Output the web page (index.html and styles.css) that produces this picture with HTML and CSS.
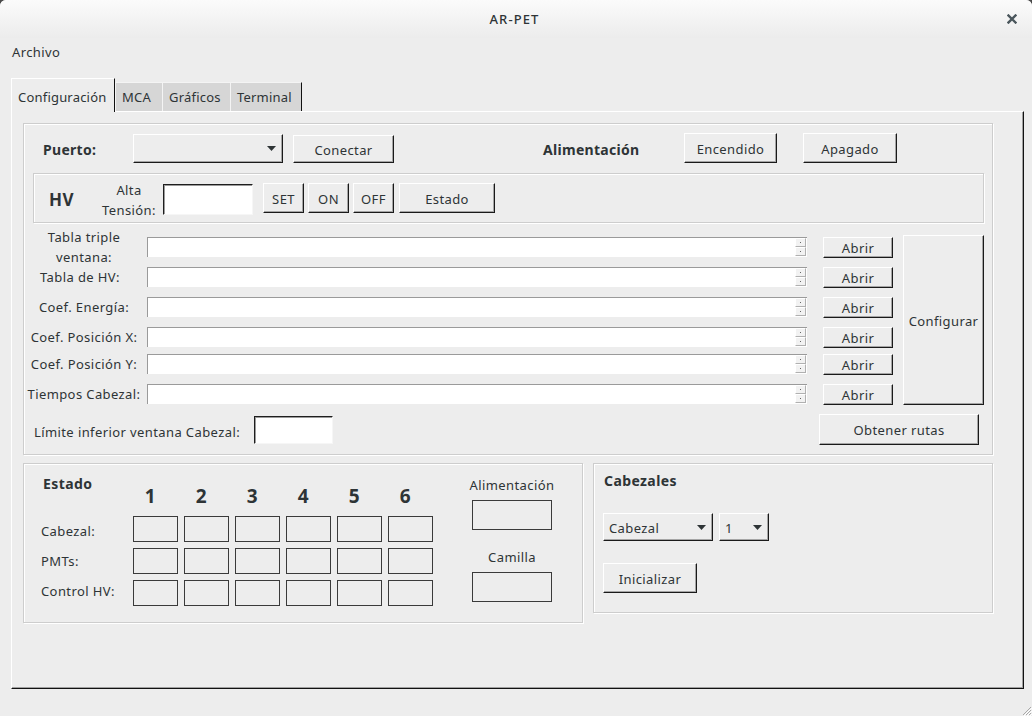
FILE: index.html
```html
<!DOCTYPE html>
<html lang="es">
<head>
<meta charset="utf-8">
<title>AR-PET</title>
<link rel="stylesheet" href="styles.css">
</head>
<body>
<div class="window">
  <div class="titlebar">
    <span></span>
    <span class="title">AR-PET</span>
    <span class="close"><svg width="10" height="10" viewBox="0 0 10 10"><path d="M1.5 1.5 L8.5 8.5 M8.5 1.5 L1.5 8.5" stroke="#4a565c" stroke-width="2.4" stroke-linecap="square"/></svg></span>
  </div>
  <div class="menubar"><span class="menu-item">Archivo</span></div>
  <div class="notebook">
    <div class="tabs">
      <div class="tab selected">Configuración</div>
      <div class="tab t-mca">MCA</div>
      <div class="tab t-graf">Gráficos</div>
      <div class="tab t-term last">Terminal</div>
    </div>
    <div class="panel">
      <div class="group top-group">
        <div class="port-row">
          <div class="bold-lbl puerto">Puerto:</div>
          <div class="combo port-combo"><span></span><svg class="arrow" width="9" height="5" viewBox="0 0 9 5"><path d="M0 0 H9 L4.5 5 Z" fill="#2e3436"/></svg></div>
          <div class="btn conectar">Conectar</div>
          <div class="bold-lbl alim">Alimentación</div>
          <div class="btn encendido">Encendido</div>
          <div class="btn apagado">Apagado</div>
        </div>
        <div class="group hv-group">
          <div class="hv-lbl">HV</div>
          <div class="alta-lbl">Alta<br>Tensión:</div>
          <div class="entry hv-entry"></div>
          <div class="btn small set">SET</div>
          <div class="btn small on">ON</div>
          <div class="btn small off">OFF</div>
          <div class="btn small estado-btn">Estado</div>
        </div>
        <div class="paths">
          <div class="plabel two">Tabla triple<br>ventana:</div>
          <div class="path"><div class="spin"><i></i><i></i></div></div>
          <div class="btn abrir">Abrir</div>
          <div class="btn configurar">Configurar</div>

          <div class="plabel hvt">Tabla de HV:</div>
          <div class="path"><div class="spin"><i></i><i></i></div></div>
          <div class="btn abrir">Abrir</div>

          <div class="plabel">Coef. Energía:</div>
          <div class="path"><div class="spin"><i></i><i></i></div></div>
          <div class="btn abrir">Abrir</div>

          <div class="plabel">Coef. Posición X:</div>
          <div class="path"><div class="spin"><i></i><i></i></div></div>
          <div class="btn abrir">Abrir</div>

          <div class="plabel">Coef. Posición Y:</div>
          <div class="path"><div class="spin"><i></i><i></i></div></div>
          <div class="btn abrir">Abrir</div>

          <div class="plabel">Tiempos Cabezal:</div>
          <div class="path"><div class="spin"><i></i><i></i></div></div>
          <div class="btn abrir">Abrir</div>
        </div>
        <div class="limit-row">
          <div class="limit-lbl">Límite inferior ventana Cabezal:</div>
          <div class="entry limit-entry"></div>
          <div class="btn obtener">Obtener rutas</div>
        </div>
      </div>

      <div class="bottom-row">
        <div class="group estado">
          <div class="estado-grid">
            <div class="estado-title">Estado</div>
            <div class="num">1</div><div class="num">2</div><div class="num">3</div><div class="num">4</div><div class="num">5</div><div class="num">6</div>
            <div class="rowlbl r1">Cabezal:</div>
            <div class="cell"></div><div class="cell"></div><div class="cell"></div><div class="cell"></div><div class="cell"></div><div class="cell"></div>
            <div class="rowlbl r2">PMTs:</div>
            <div class="cell"></div><div class="cell"></div><div class="cell"></div><div class="cell"></div><div class="cell"></div><div class="cell"></div>
            <div class="rowlbl r3">Control HV:</div>
            <div class="cell"></div><div class="cell"></div><div class="cell"></div><div class="cell"></div><div class="cell"></div><div class="cell"></div>
          </div>
          <div class="estado-side">
            <div class="side-lbl">Alimentación</div>
            <div class="side-box"></div>
            <div class="side-lbl camilla">Camilla</div>
            <div class="side-box"></div>
          </div>
        </div>
        <div class="group cabezales">
          <div class="cab-title">Cabezales</div>
          <div class="cab-combos">
            <div class="combo cab-combo"><span>Cabezal</span><svg class="arrow" width="9" height="5" viewBox="0 0 9 5"><path d="M0 0 H9 L4.5 5 Z" fill="#2e3436"/></svg></div>
            <div class="combo num-combo"><span>1</span><svg class="arrow" width="9" height="5" viewBox="0 0 9 5"><path d="M0 0 H9 L4.5 5 Z" fill="#2e3436"/></svg></div>
          </div>
          <div class="btn inicializar">Inicializar</div>
        </div>
      </div>
    </div>
  </div>
  <div class="footer">
    <svg class="grip" width="12" height="12" viewBox="0 0 12 12"><path d="M11 3 L3 11 M11 6 L6 11 M11 9 L9 11" stroke="#a8a8a8" stroke-width="1"/><path d="M12 4 L4 12 M12 7 L7 12 M12 10 L10 12" stroke="#ffffff" stroke-width="1"/></svg>
  </div>
</div>
</body>
</html>
```

FILE: styles.css
```css
html, body {
  margin: 0;
  padding: 0;
  background: #4a4a4a;
}
body {
  font-family: "Noto Sans", "DejaVu Sans", sans-serif;
  font-size: 13px;
  letter-spacing: 0.4px;
  color: #2e3436;
}
.window {
  width: 1032px;
  height: 716px;
  background: #ededed;
  border-radius: 6px 6px 0 0;
  overflow: hidden;
  display: flex;
  flex-direction: column;
}
.titlebar {
  height: 38px;
  flex: none;
  background: linear-gradient(#fbfbfb, #ececec);
  display: grid;
  grid-template-columns: 1fr auto 1fr;
  align-items: center;
}
.title {
  font-size: 13px;
  color: #2e3436;
  letter-spacing: 1.1px;
  font-weight: 500;
  padding-right: 3px;
}
.close {
  justify-self: end;
  margin-right: 15px;
  display: flex;
}
.menubar {
  height: 28px;
  flex: none;
  display: flex;
  align-items: center;
  padding-left: 12px;
}
.notebook {
  margin: 12px 8px 0 11px;
  display: flex;
  flex-direction: column;
}
.tabs {
  height: 33px;
  display: flex;
  align-items: flex-end;
}
.tab {
  box-sizing: border-box;
  height: 29px;
  background: #d6d6d6;
  border-top: 1px solid #f4f4f4;
  border-left: 1px solid #f4f4f4;
  display: flex;
  align-items: center;
  padding-left: 6px;
  white-space: nowrap;
  letter-spacing: 0.2px;
}
.tab.selected {
  height: 34px;
  margin-bottom: -1px;
  position: relative;
  background: #ededed;
  border-top: 1px solid #ffffff;
  border-left: 1px solid #ffffff;
  border-right: 1px solid #111;
  width: 104px;
  padding-left: 6px;
  padding-top: 2px;
}
.t-mca { width: 47px; }
.t-graf { width: 68px; }
.t-term { width: 72px; }
.tab.last { border-right: 1px solid #111; }
.panel {
  box-sizing: border-box;
  height: 578px;
  border-top: 1px solid #fff;
  border-left: 1px solid #fff;
  border-right: 1px solid #111;
  border-bottom: 1px solid #111;
  box-shadow: inset -1px -1px 0 #a0a0a0;
  padding: 11px 0 0 11px;
}
.group {
  box-sizing: border-box;
  border: 1px solid #cdcdcd;
  box-shadow: inset 1px 1px 0 #fff, 1px 1px 0 #fff;
}
.top-group {
  width: 970px;
  height: 332px;
  display: flex;
  flex-direction: column;
}
.btn {
  box-sizing: border-box;
  display: flex;
  align-items: center;
  justify-content: center;
  padding-top: 1px;
  background: #ededed;
  border-top: 1px solid #fff;
  border-left: 1px solid #fff;
  border-right: 1px solid #1a1a1a;
  border-bottom: 1px solid #1a1a1a;
  box-shadow: inset -1px -1px 0 #a5a5a5;
  white-space: nowrap;
}
.combo {
  box-sizing: border-box;
  display: flex;
  align-items: center;
  justify-content: space-between;
  background: #ededed;
  border-top: 1px solid #fff;
  border-left: 1px solid #fff;
  border-right: 1px solid #1a1a1a;
  border-bottom: 1px solid #1a1a1a;
  box-shadow: inset -1px -1px 0 #a5a5a5;
  padding: 1px 6px 0 5px;
}
.arrow { flex: none; margin-top: -1px; }
.entry {
  box-sizing: border-box;
  background: #fff;
  border-top: 1px solid #1e1e1e;
  border-left: 1px solid #1e1e1e;
  border-right: 1px solid #f6f6f6;
  border-bottom: 1px solid #f6f6f6;
  box-shadow: inset 1px 1px 0 #9a9a9a;
}
.bold-lbl {
  font-weight: bold;
  font-size: 14px;
  letter-spacing: 0.3px;
}
.port-row {
  margin-top: 9px;
  height: 30px;
  display: flex;
  align-items: flex-start;
  padding-left: 19px;
}
.puerto {
  width: 90px;
  line-height: 30px;
  padding-top: 2px;
}
.port-combo {
  width: 150px;
  height: 29px;
  margin-top: 1px;
}
.conectar {
  width: 101px;
  height: 28px;
  margin-top: 2px;
  margin-left: 10px;
}
.alim {
  width: 141px;
  margin-left: 149px;
  line-height: 30px;
  padding-top: 2px;
}
.encendido {
  width: 93px;
  height: 30px;
}
.apagado {
  width: 94px;
  height: 30px;
  margin-left: 26px;
}
.hv-group {
  margin: 10px 0 0 9px;
  width: 951px;
  height: 50px;
  display: flex;
  align-items: center;
  padding-left: 15px;
}
.hv-lbl {
  width: 49px;
  font-weight: bold;
  font-size: 17px;
  padding-top: 2px;
}
.alta-lbl {
  width: 62px;
  text-align: center;
  line-height: 20px;
  padding-top: 4px;
}
.hv-entry {
  width: 90px;
  height: 31px;
  margin-left: 3px;
  margin-top: 2px;
}
.small { height: 30px; }
.set { width: 41px; margin-left: 10px; }
.on { width: 41px; margin-left: 4px; }
.off { width: 41px; margin-left: 4px; }
.estado-btn { width: 96px; margin-left: 5px; }
.paths {
  margin: 9px 0 0 3px;
  display: grid;
  grid-template-columns: 120px 676px 80px 81px;
  grid-template-rows: 30px 30px 30px 30px 24px 36px;
  align-items: center;
}
.plabel {
  text-align: center;
  padding-right: 6px;
  line-height: 20px;
  white-space: nowrap;
}
.plabel.two {
  margin: -5px 0;
}
.plabel.hvt {
  padding-right: 14px;
}
.path {
  box-sizing: border-box;
  width: 660px;
  height: 20px;
  background: #fff;
  border-top: 1px solid #9a9a9a;
  border-left: 1px solid #9a9a9a;
  display: flex;
  justify-content: flex-end;
  align-items: flex-start;
}
.spin {
  display: flex;
  flex-direction: column;
  margin-right: 1px;
}
.spin i {
  box-sizing: border-box;
  width: 11px;
  height: 9px;
  background: #f2f2f2;
  border-top: 1px solid #fff;
  border-left: 1px solid #fff;
  border-right: 1px solid #b0b0b0;
  border-bottom: 1px solid #b0b0b0;
  display: flex;
  align-items: center;
  justify-content: center;
}
.spin i::after {
  content: "";
  width: 1px;
  height: 1px;
  background: #666;
}
.abrir {
  width: 70px;
  height: 21px;
}
.configurar {
  grid-column: 4;
  grid-row: 1 / 7;
  align-self: start;
  margin-top: 3px;
  height: 170px;
}
.limit-row {
  margin-top: 2px;
  height: 31px;
  display: flex;
  align-items: center;
  padding-left: 10px;
  padding-right: 13px;
}
.limit-lbl {
  padding-top: 4px;
}
.limit-entry {
  width: 79px;
  height: 28px;
  margin-left: 14px;
}
.obtener {
  margin-left: auto;
  width: 160px;
  height: 31px;
}
.bottom-row {
  margin-top: 8px;
  display: flex;
  align-items: flex-start;
  gap: 10px;
}
.estado {
  width: 560px;
  height: 160px;
  display: flex;
  align-items: flex-start;
  padding: 10px 0 0 17px;
}
.estado-grid {
  display: grid;
  grid-template-columns: 86px repeat(6, 45px);
  grid-template-rows: 36px 26px 26px 26px;
  column-gap: 6px;
  row-gap: 6px;
}
.estado-title {
  font-weight: bold;
  font-size: 14px;
  line-height: 20px;
  align-self: start;
  margin-left: 2px;
}
.num {
  font-weight: bold;
  font-size: 19px;
  line-height: 24px;
  align-self: end;
  justify-self: center;
  margin-bottom: 2px;
  margin-right: 10px;
}
.rowlbl {
  align-self: center;
  white-space: nowrap;
}
.rowlbl.r1 { padding-top: 3px; }
.rowlbl.r2 { padding-top: 0; }
.rowlbl.r3 { margin-top: -4px; }
.cell {
  box-sizing: border-box;
  border: 1px solid #3a3a3a;
}
.estado-side {
  margin-left: 31px;
  width: 96px;
  display: flex;
  flex-direction: column;
  align-items: center;
}
.side-lbl {
  line-height: 20px;
  margin-top: 1px;
}
.side-lbl.camilla {
  margin-top: 17px;
}
.side-box {
  box-sizing: border-box;
  width: 80px;
  height: 30px;
  margin-top: 5px;
  border: 1px solid #3a3a3a;
}
.cabezales {
  width: 400px;
  height: 150px;
  padding: 7px 0 0 9px;
  display: flex;
  flex-direction: column;
  align-items: flex-start;
}
.cab-title {
  font-weight: bold;
  font-size: 14px;
  line-height: 20px;
  margin-left: 1px;
}
.cab-combos {
  margin-top: 22px;
  display: flex;
  gap: 6px;
}
.cab-combo {
  width: 110px;
  height: 28px;
}
.num-combo {
  width: 50px;
  height: 28px;
}
.inicializar {
  margin-top: 22px;
  width: 94px;
  height: 30px;
}
.footer {
  flex: 1;
  display: flex;
  justify-content: flex-end;
  align-items: flex-end;
}
.grip { display: block; }
```
